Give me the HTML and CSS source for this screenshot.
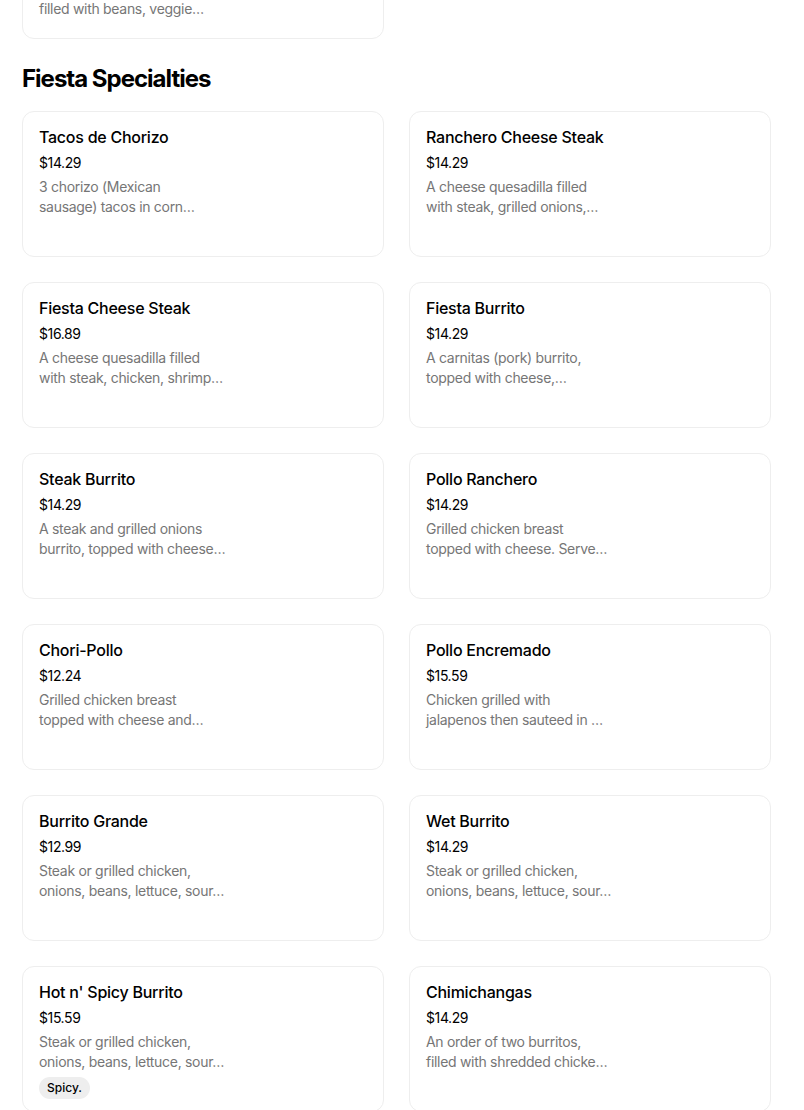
FILE: index.html
```html
<!DOCTYPE html>
<html>
<head>
<meta charset="utf-8">
<link rel="stylesheet" href="styles.css">
</head>
<body>
<div class="page">
  <div class="grid">
    <div class="card">
      <div class="title">Veggie Burrito<br>Supreme</div>
      <div class="price">$12.99</div>
      <div class="desc"><span>A large flour tortilla</span><span>filled with beans, veggie…</span></div>
    </div>
  </div>
  <h2 class="section">Fiesta Specialties</h2>
  <div class="grid">
    <div class="card">
      <div class="title">Tacos de Chorizo</div>
      <div class="price">$14.29</div>
      <div class="desc"><span>3 chorizo (Mexican</span><span>sausage) tacos in corn…</span></div>
    </div>
    <div class="card">
      <div class="title">Ranchero Cheese Steak</div>
      <div class="price">$14.29</div>
      <div class="desc"><span>A cheese quesadilla filled</span><span>with steak, grilled onions,…</span></div>
    </div>
    <div class="card">
      <div class="title">Fiesta Cheese Steak</div>
      <div class="price">$16.89</div>
      <div class="desc"><span>A cheese quesadilla filled</span><span>with steak, chicken, shrimp…</span></div>
    </div>
    <div class="card">
      <div class="title">Fiesta Burrito</div>
      <div class="price">$14.29</div>
      <div class="desc"><span>A carnitas (pork) burrito,</span><span>topped with cheese,…</span></div>
    </div>
    <div class="card">
      <div class="title">Steak Burrito</div>
      <div class="price">$14.29</div>
      <div class="desc"><span>A steak and grilled onions</span><span>burrito, topped with cheese…</span></div>
    </div>
    <div class="card">
      <div class="title">Pollo Ranchero</div>
      <div class="price">$14.29</div>
      <div class="desc"><span>Grilled chicken breast</span><span>topped with cheese. Serve…</span></div>
    </div>
    <div class="card">
      <div class="title">Chori-Pollo</div>
      <div class="price">$12.24</div>
      <div class="desc"><span>Grilled chicken breast</span><span>topped with cheese and…</span></div>
    </div>
    <div class="card">
      <div class="title">Pollo Encremado</div>
      <div class="price">$15.59</div>
      <div class="desc"><span>Chicken grilled with</span><span>jalapenos then sauteed in …</span></div>
    </div>
    <div class="card">
      <div class="title">Burrito Grande</div>
      <div class="price">$12.99</div>
      <div class="desc"><span>Steak or grilled chicken,</span><span>onions, beans, lettuce, sour…</span></div>
    </div>
    <div class="card">
      <div class="title">Wet Burrito</div>
      <div class="price">$14.29</div>
      <div class="desc"><span>Steak or grilled chicken,</span><span>onions, beans, lettuce, sour…</span></div>
    </div>
    <div class="card">
      <div class="title">Hot n' Spicy Burrito</div>
      <div class="price">$15.59</div>
      <div class="desc"><span>Steak or grilled chicken,</span><span>onions, beans, lettuce, sour…</span></div>
      <div class="badge">Spicy.</div>
    </div>
    <div class="card">
      <div class="title">Chimichangas</div>
      <div class="price">$14.29</div>
      <div class="desc"><span>An order of two burritos,</span><span>filled with shredded chicke…</span></div>
    </div>
  </div>
</div>
</body>
</html>
```
FILE: styles.css
```css
html, body {
  margin: 0;
  padding: 0;
  background: #fff;
}
body {
  font-family: Inter, "Noto Sans", sans-serif;
  color: #000;
  overflow: hidden;
}
.page {
  margin-top: -107px;
  padding-left: 22px;
  width: 750px;
}
.grid {
  display: grid;
  grid-template-columns: 362px 362px;
  column-gap: 25px;
  row-gap: 25px;
}
.card {
  box-sizing: border-box;
  min-height: 146px;
  border: 1px solid #eeeeee;
  border-radius: 12px;
  padding: 15px 16px 12px 16px;
  display: flex;
  flex-direction: column;
  align-items: flex-start;
}
.title {
  font-size: 16px;
  font-weight: 500;
  line-height: 20px;
  letter-spacing: -0.25px;
}
.price {
  margin-top: 6px;
  font-size: 14px;
  line-height: 20px;
  letter-spacing: -0.4px;
}
.desc {
  margin-top: 4px;
  font-size: 14px;
  line-height: 20px;
  color: #767676;
  display: flex;
  flex-direction: column;
  letter-spacing: -0.3px;
}
.desc span {
  white-space: nowrap;
}
.badge {
  margin-top: 5px;
  background: #eeeeee;
  border-radius: 11px;
  font-size: 12px;
  font-weight: 500;
  line-height: 22px;
  padding: 0 8px;
}
.section {
  margin: 24px 0 16px 0;
  font-size: 24px;
  line-height: 32px;
  font-weight: 700;
  letter-spacing: -1px;
}
```
